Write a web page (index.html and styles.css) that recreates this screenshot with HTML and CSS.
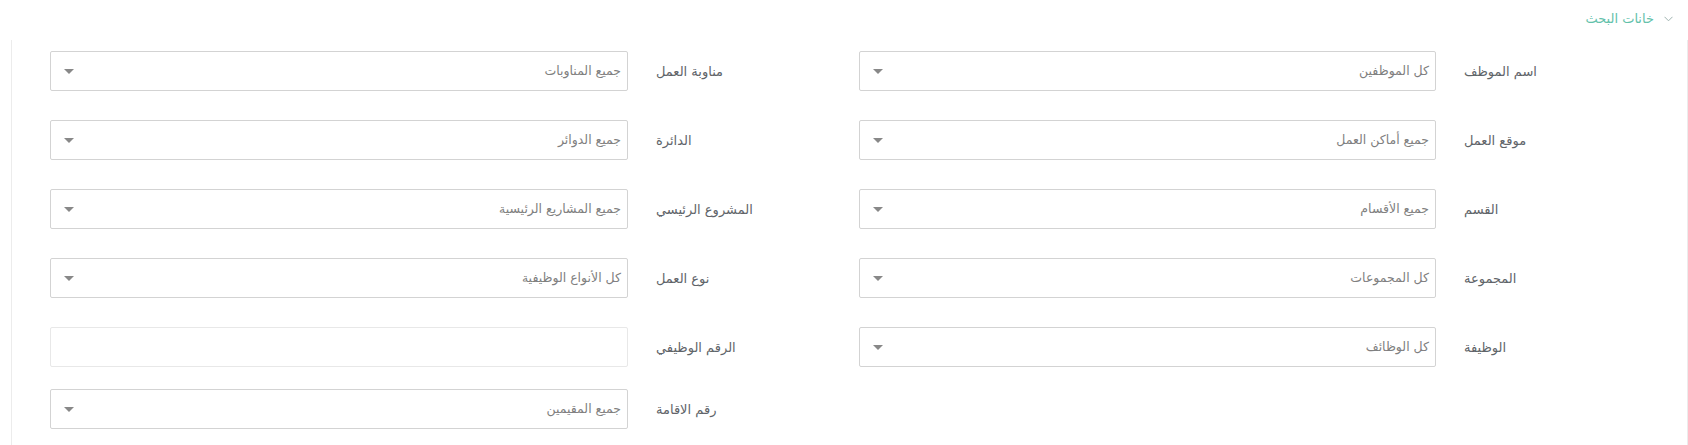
FILE: index.html
```html
<!DOCTYPE html>
<html lang="ar" dir="rtl">
<head>
<meta charset="utf-8">
<title>خانات البحث</title>
<link rel="stylesheet" href="styles.css">
</head>
<body>
<div class="panel">
  <div class="panel-head">
    <svg class="chev" width="9" height="6" viewBox="0 0 9 6"><polyline points="0.5,0.8 4.5,4.8 8.5,0.8" fill="none" stroke="#9fb3b0" stroke-width="1"/></svg>
    <span class="panel-title">خانات البحث</span>
  </div>
  <div class="panel-body">
    <div class="grid">
      <div class="field field-a"><label class="lbl">اسم الموظف</label><div class="sel"><span class="ph">كل الموظفين</span><span class="arrow"></span></div></div>
      <div class="field field-b"><label class="lbl">مناوبة العمل</label><div class="sel"><span class="ph">جميع المناوبات</span><span class="arrow"></span></div></div>

      <div class="field field-a"><label class="lbl">موقع العمل</label><div class="sel"><span class="ph">جميع أماكن العمل</span><span class="arrow"></span></div></div>
      <div class="field field-b"><label class="lbl">الدائرة</label><div class="sel"><span class="ph">جميع الدوائر</span><span class="arrow"></span></div></div>

      <div class="field field-a"><label class="lbl">القسم</label><div class="sel"><span class="ph">جميع الأقسام</span><span class="arrow"></span></div></div>
      <div class="field field-b"><label class="lbl">المشروع الرئيسي</label><div class="sel"><span class="ph">جميع المشاريع الرئيسية</span><span class="arrow"></span></div></div>

      <div class="field field-a"><label class="lbl">المجموعة</label><div class="sel"><span class="ph">كل المجموعات</span><span class="arrow"></span></div></div>
      <div class="field field-b"><label class="lbl">نوع العمل</label><div class="sel"><span class="ph">كل الأنواع الوظيفية</span><span class="arrow"></span></div></div>

      <div class="field field-a"><label class="lbl">الوظيفة</label><div class="sel"><span class="ph">كل الوظائف</span><span class="arrow"></span></div></div>
      <div class="field field-b"><label class="lbl">الرقم الوظيفي</label><input class="txt" type="text"></div>

      <div class="field field-a last"></div>
      <div class="field field-b last"><label class="lbl">رقم الاقامة</label><div class="sel"><span class="ph">جميع المقيمين</span><span class="arrow"></span></div></div>
    </div>
  </div>
</div>
</body>
</html>
```
FILE: styles.css
```css
html, body {
  margin: 0;
  padding: 0;
  background: #ffffff;
}
body {
  font-family: "DejaVu Sans", sans-serif;
  direction: rtl;
  height: 445px;
  overflow: hidden;
}
.panel {
  margin-left: 11px;
  width: 1677px;
}
.panel-head {
  height: 40px;
  display: flex;
  align-items: center;
  padding-right: 15px;
  padding-bottom: 3px;
  box-sizing: border-box;
}
.chev {
  display: block;
  margin-left: 10px;
}
.panel-title {
  color: #62c1aa;
  font-size: 13px;
  line-height: 1;
}
.panel-body {
  border-left: 1px solid #ececec;
  border-right: 1px solid #ececec;
  padding: 11px 149px 30px 39px;
}
.grid {
  display: grid;
  grid-template-columns: 679px 678px;
  column-gap: 131px;
  row-gap: 29px;
  justify-content: start;
}
.field {
  display: flex;
  align-items: center;
  justify-content: flex-end;
  height: 40px;
}
.field.last {
  margin-top: -7px;
}
.lbl {
  flex: none;
  white-space: nowrap;
  color: #606469;
  font-size: 13px;
  margin-left: 28px;
  line-height: 1;
}
.sel, .txt {
  flex: none;
  height: 40px;
  box-sizing: border-box;
  border: 1px solid #d3d3d3;
  border-radius: 2px;
  display: flex;
  align-items: center;
  padding: 0 6px 0 13px;
  background: #fff;
}
.field-a .sel, .field-a .txt {
  width: 577px;
}
.field-b .sel, .field-b .txt {
  width: 578px;
}
.txt {
  border-color: #e8e8e8;
  margin: 0;
  outline: none;
}
.ph {
  flex: 1;
  color: #808080;
  font-size: 12.5px;
  line-height: 1;
}
.arrow {
  flex: none;
  width: 0;
  height: 0;
  border-left: 5px solid transparent;
  border-right: 5px solid transparent;
  border-top: 5px solid #888;
}
```
